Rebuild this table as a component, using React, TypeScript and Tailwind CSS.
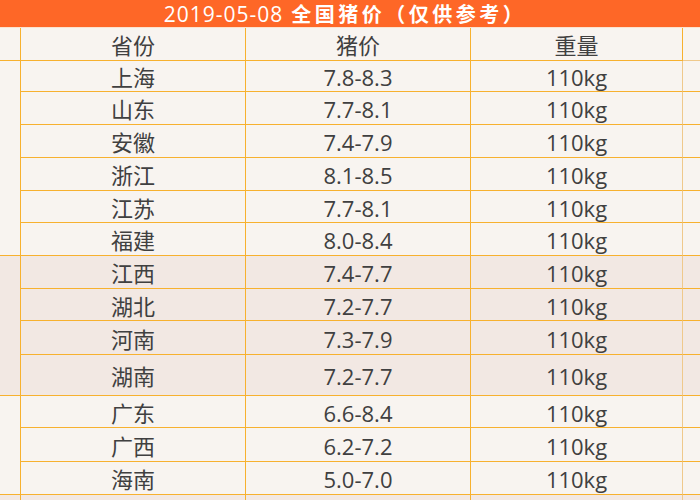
import React from "react";

type Row = { name: string; price: string; weight: string; h: number };

const groups: { tone: "cream" | "pink"; rows: Row[] }[] = [
  {
    tone: "cream",
    rows: [
      { name: "上海", price: "7.8-8.3", weight: "110kg", h: 31 },
      { name: "山东", price: "7.7-8.1", weight: "110kg", h: 33 },
      { name: "安徽", price: "7.4-7.9", weight: "110kg", h: 33 },
      { name: "浙江", price: "8.1-8.5", weight: "110kg", h: 33 },
      { name: "江苏", price: "7.7-8.1", weight: "110kg", h: 32 },
      { name: "福建", price: "8.0-8.4", weight: "110kg", h: 33 },
    ],
  },
  {
    tone: "pink",
    rows: [
      { name: "江西", price: "7.4-7.7", weight: "110kg", h: 33 },
      { name: "湖北", price: "7.2-7.7", weight: "110kg", h: 32 },
      { name: "河南", price: "7.3-7.9", weight: "110kg", h: 34 },
      { name: "湖南", price: "7.2-7.7", weight: "110kg", h: 41 },
    ],
  },
  {
    tone: "cream",
    rows: [
      { name: "广东", price: "6.6-8.4", weight: "110kg", h: 32 },
      { name: "广西", price: "6.2-7.2", weight: "110kg", h: 34 },
      { name: "海南", price: "5.0-7.0", weight: "110kg", h: 33 },
    ],
  },
  {
    tone: "pink",
    rows: [{ name: "", price: "", weight: "", h: 33 }],
  },
];

const cell =
  "flex items-center justify-center border-b border-r border-[#f7b12f] pt-[3px] text-[22px] text-[#404040]";

const App = () => {
  return (
    <div
      className="h-[500px] w-[700px] overflow-hidden bg-[#f8f4f0]"
      style={{ fontFamily: '"Open Sans", "Noto Sans CJK SC", sans-serif' }}
    >
      <div className="flex h-[27px] items-center justify-center bg-[#fe6727] pr-[10px] text-white">
        <span className="text-[21px] leading-[26px] tracking-[1px]">2019-05-08</span>
        <span
          className="ml-[8px] text-[20px] font-bold leading-[26px] tracking-[3.5px]"
          style={{ fontFamily: '"Noto Sans CJK SC", sans-serif' }}
        >
          全国猪价（仅供参考）
        </span>
      </div>
      <div className="h-px bg-[#fbe3cf]" />

      <div className="grid grid-cols-[21px_225px_225px_212px_17px]">
        {/* header row */}
        <div className="h-[33px] border-b border-r border-[#f7b12f]" />
        <div className={`${cell} h-[33px]`}>省份</div>
        <div className={`${cell} h-[33px]`}>猪价</div>
        <div className={`${cell} h-[33px]`}>重量</div>
        <div className="h-[33px] border-b border-[#efc98c]" />

        {groups.map((g, gi) => {
          const bg = g.tone === "pink" ? "bg-[#f2e8e3]" : "bg-[#f8f4f0]";
          return (
            <React.Fragment key={gi}>
              <div
                className={`${bg} border-b border-r border-[#f7b12f]`}
                style={{ gridRow: `span ${g.rows.length}` }}
              />
              {g.rows.map((r, ri) => (
                <React.Fragment key={ri}>
                  <div className={`${cell} ${bg}`} style={{ height: r.h }}>
                    {r.name}
                  </div>
                  <div className={`${cell} ${bg}`} style={{ height: r.h }}>
                    {r.price}
                  </div>
                  <div className={`${cell} ${bg} border-r-[#efc98c]`} style={{ height: r.h }}>
                    {r.weight}
                  </div>
                  <div className={`${bg} border-b border-[#f7b12f]`} style={{ height: r.h }} />
                </React.Fragment>
              ))}
            </React.Fragment>
          );
        })}
      </div>
    </div>
  );
};

export default App;
